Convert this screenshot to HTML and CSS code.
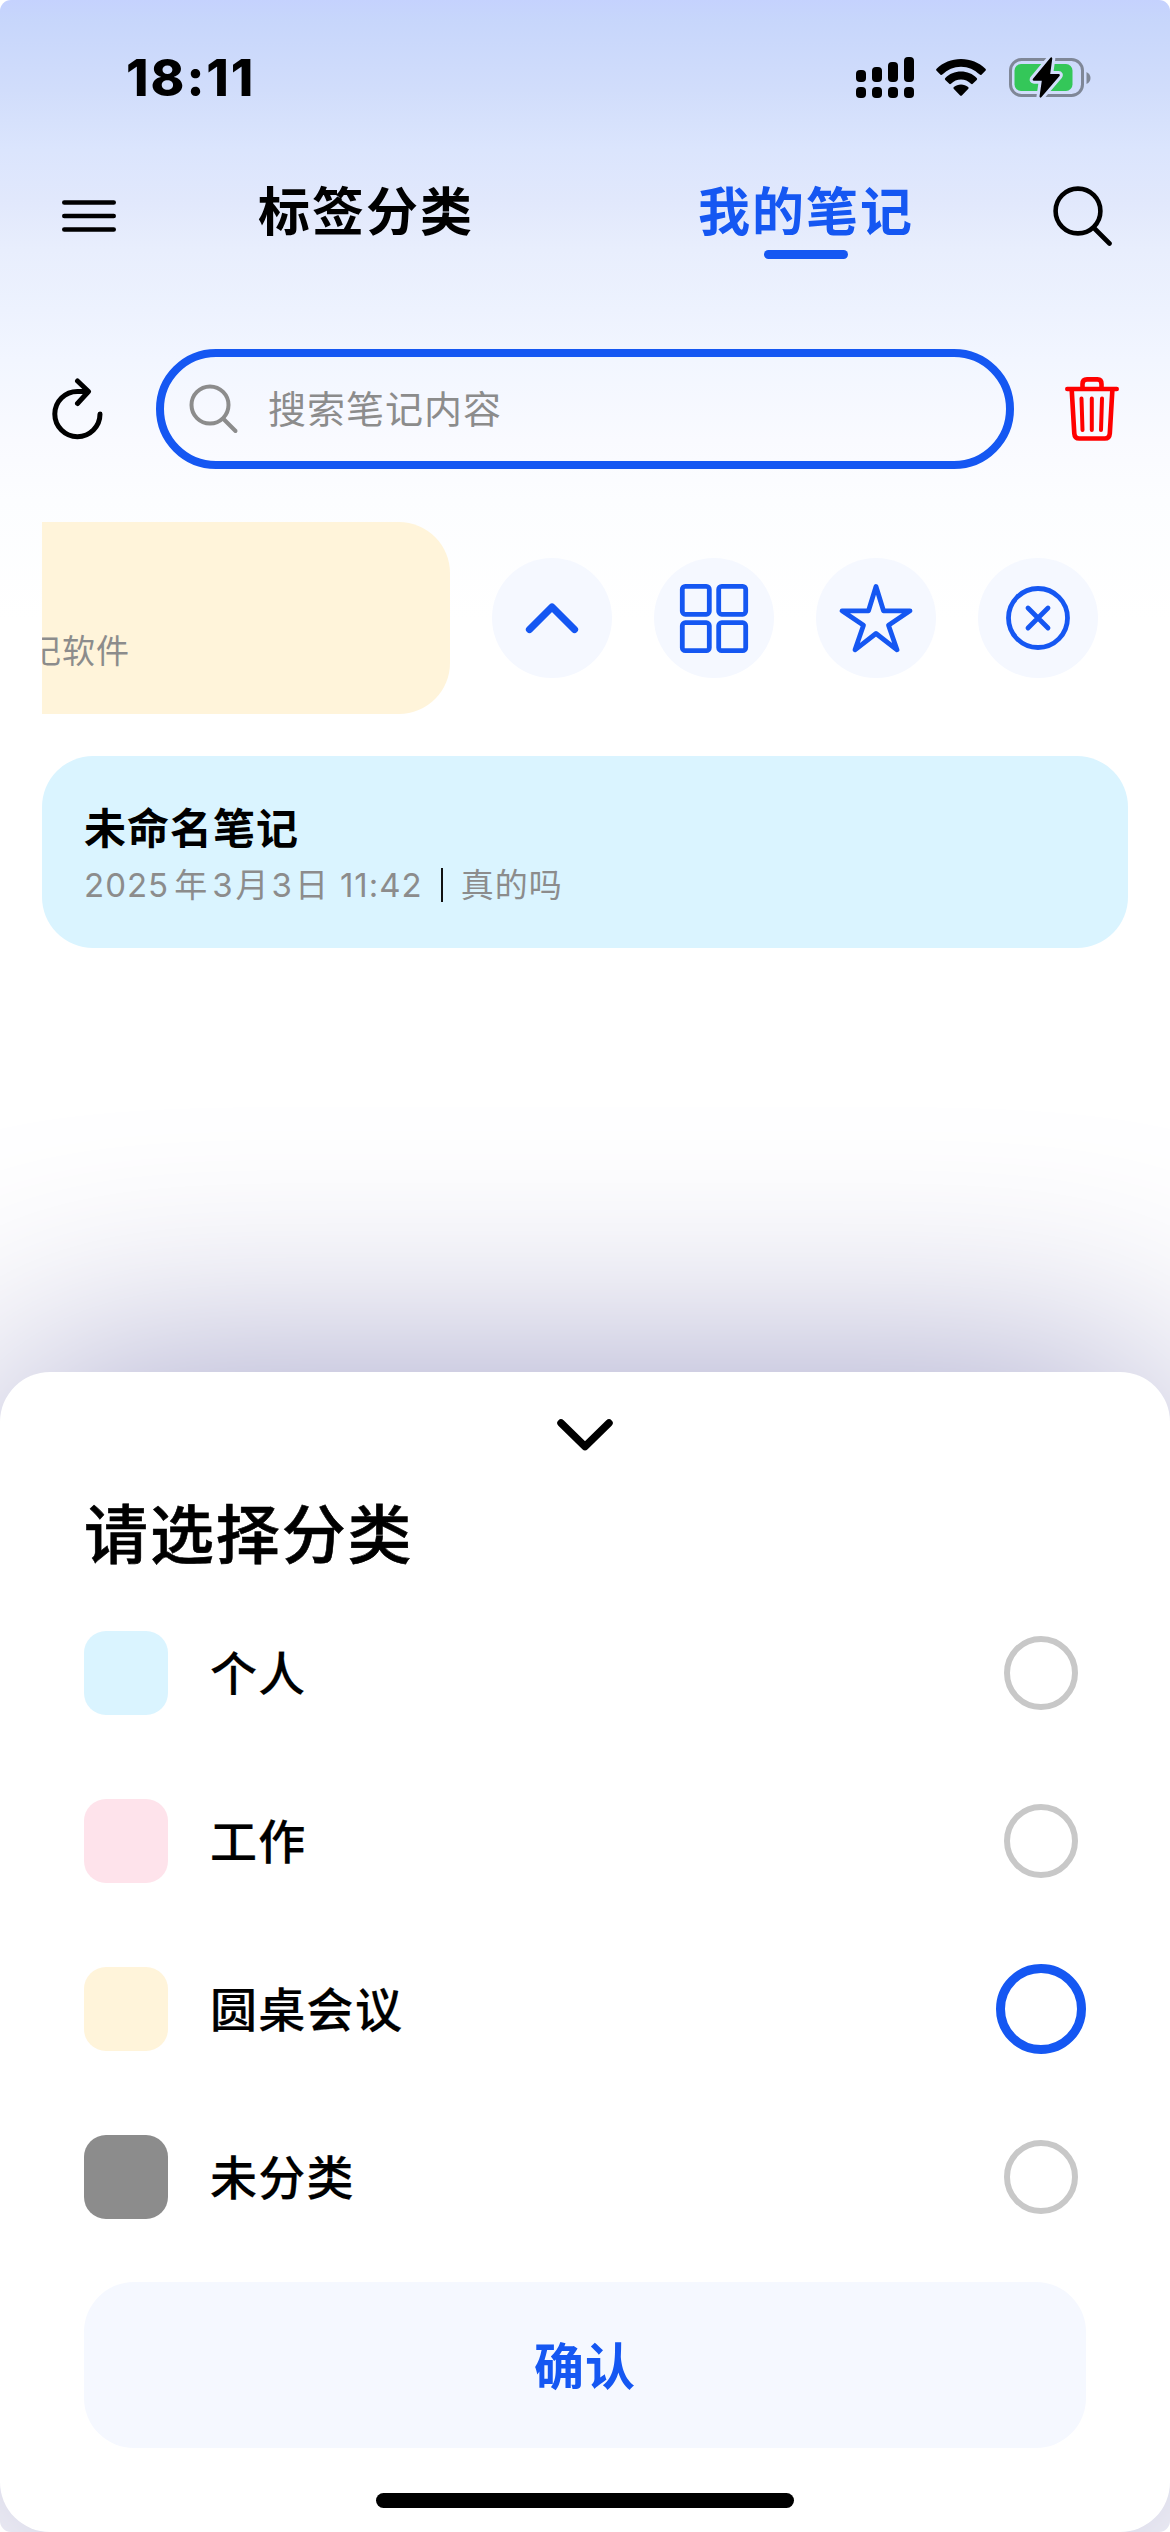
FILE: index.html
```html
<!DOCTYPE html>
<html lang="zh-CN">
<head>
<meta charset="utf-8">
<title>我的笔记</title>
<link rel="stylesheet" href="styles.css">
</head>
<body>
<div class="screen">
  <header class="status">
    <span class="time">18:11</span>
    <span class="indicators">
      <svg class="signal" viewBox="0 0 58 42">
        <rect x="0" y="13" width="10" height="12" rx="4"/><rect x="16" y="10" width="10" height="15" rx="4"/><rect x="32" y="5" width="10" height="20" rx="4"/><rect x="48" y="0" width="10" height="25" rx="4"/>
        <rect x="0" y="30" width="10" height="11" rx="4"/><rect x="16" y="30" width="10" height="11" rx="4"/><rect x="32" y="30" width="10" height="11" rx="4"/><rect x="48" y="30" width="10" height="11" rx="4"/>
      </svg>
      <svg class="wifi" viewBox="0 0 50 37">
        <path d="M25 0C15.500 0 7 3.600.600 9.700q-1 1 0 2l3.700 3.800q1 1 2 .100C11.400 10.700 17.900 7.700 25 7.700s13.600 3 18.700 7.900q1 .9 2-.1l3.700-3.800q1-1 0-2C43 3.600 34.500 0 25 0z"/>
        <path d="M25 12.600c-6.100 0-11.600 2.400-15.700 6.300q-1 1 0 2l3.700 3.700q1 1 2 .1c2.700-2.500 6.200-4.100 10-4.100s7.300 1.600 10 4.100q1 .9 2-.1l3.700-3.700q1-1 0-2C36.600 15 31.100 12.600 25 12.600z"/>
        <path d="M25 25.400c-2.700 0-5.200 1-7.100 2.700q-1 .9 0 1.900l6 6.200q1.100 1.100 2.200 0l6-6.200q1-1 0-1.900C30.200 26.400 27.700 25.400 25 25.400z"/>
      </svg>
      <svg class="battery" viewBox="0 0 84 42">
        <rect x="2.500" y="2.500" width="72" height="36" rx="11" fill="none" stroke="#7f8797" stroke-width="3"/>
        <path d="M78.500 15q4 2 4 6t-4 6z" fill="#7f8797"/>
        <rect x="6.500" y="7" width="58" height="27" rx="6.500" fill="#34c759"/>
        <path d="M42.200 1 25 21.700q-1 2 1 2h7.800L31.500 39.500q.5 2 2 .5L51.500 19q1-2-1-2h-8.300L44.300 1.500q-.6-2-2.100-.5z" fill="#000" stroke="#d1ddfb" stroke-width="6" paint-order="stroke"/>
      </svg>
    </span>
  </header>

  <nav class="tabs">
    <svg class="menu" viewBox="0 0 54 32"><path d="M2.300 2.500h49.400M2.300 16h49.400M2.300 29.500h49.400"/></svg>
    <span class="tab">标签分类</span>
    <span class="tab active">我的笔记</span>
    <svg class="find" viewBox="0 0 60 60"><circle cx="25" cy="25" r="22.400"/><path d="m41 42 15.500 15.500"/></svg>
  </nav>

  <div class="search-row">
    <svg class="refresh" viewBox="0 0 52 62"><path d="M48 36A22.600 22.600 0 1 1 25.500 13.500H36M25.500 3 36.500 13.500 25.500 25.500"/></svg>
    <div class="field">
      <svg class="lens" viewBox="0 0 50 50"><circle cx="21" cy="21" r="18.500"/><path d="m34.500 35 12 12"/></svg>
      <span>搜索笔记内容</span>
    </div>
    <svg class="trash" viewBox="0 0 54 64"><path d="M2.300 12h49.400M17.500 11V7q0-4.600 4.500-4.600h10.500q4 0 4 4.600v4M6.700 12.500l2.600 44q.4 5 5 5h25.500q4.600 0 5-5l2.600-44"/><path class="ribs" d="M16.500 21.500l1 31.500M26.800 21.500V53M37 21.500l-1 31.500"/></svg>
  </div>

  <div class="swipe-row">
    <div class="note swiped"><span class="excerpt">记软件</span></div>
    <div class="action"><svg viewBox="0 0 120 120"><path class="heavy" d="M37.500 71.500 60 49l22.500 22.500"/></svg></div>
    <div class="action"><svg viewBox="0 0 120 120"><rect x="28.300" y="28.300" width="27" height="28" rx="3"/><rect x="64.700" y="28.300" width="27" height="28" rx="3"/><rect x="28.300" y="64.700" width="27" height="28" rx="3"/><rect x="64.700" y="64.700" width="27" height="28" rx="3"/></svg></div>
    <div class="action"><svg viewBox="0 0 120 120"><path d="M60 28.500 67.500 52.800H94L72.500 67.300 81 91.800 60 75.500 39 91.800 47.500 67.300 26 52.800H52.500z"/></svg></div>
    <div class="action"><svg viewBox="0 0 120 120"><circle cx="60" cy="60" r="29.500"/><path d="m50 50 20 20M70 50 50 70"/></svg></div>
  </div>

  <article class="note blue">
    <h2>未命名笔记</h2>
    <p><span class="date"><span class="year">2025</span><span class="unit">年</span><span>3</span><span>月</span><span>3</span><span>日</span><span class="clock">11:42</span></span><i></i><span class="excerpt">真的吗</span></p>
  </article>

  <section class="sheet">
    <svg class="collapse" viewBox="0 0 56 32"><path d="m4 4 24 23.500L52 4"/></svg>
    <h1>请选择分类</h1>
    <ul>
      <li><b class="swatch sky"></b><span>个人</span><b class="radio"></b></li>
      <li><b class="swatch pink"></b><span>工作</span><b class="radio"></b></li>
      <li><b class="swatch cream"></b><span>圆桌会议</span><b class="radio on"></b></li>
      <li><b class="swatch gray"></b><span>未分类</span><b class="radio"></b></li>
    </ul>
    <div class="confirm">确认</div>
    <div class="home"></div>
  </section>
</div>
</body>
</html>
```
FILE: styles.css
```css
* { box-sizing: border-box; margin: 0; padding: 0; }
body { background: #fff; font-family: Inter, "Noto Sans CJK SC", sans-serif; color: #000; }
svg { display: block; flex: none; fill: none; stroke-linecap: round; stroke-linejoin: round; }
.screen {
  width: 1170px; height: 2532px; overflow: hidden; border-radius: 11px;
  display: flex; flex-direction: column;
  background: linear-gradient(#c5d2fe 0, #c7d6fb 20px, #d1ddfb 90px, #dbe5fd 150px, #e1e8fc 200px, #e8eefd 250px, #edf2fe 310px, #f2f6ff 360px, #f9faff 440px, #fcfdff 500px, #fff 620px);
}
.status { height: 156px; padding: 0 78px 0 126px; display: flex; justify-content: space-between; }
.time { font-size: 51px; font-weight: 800; line-height: 60px; padding-top: 48px; letter-spacing: 2px; }
.indicators { display: flex; align-items: flex-start; padding-top: 57px; }
.signal { width: 58px; height: 42px; fill: #000; margin-right: 22px; }
.wifi { width: 50px; height: 37px; fill: #000; margin: 2px 22px 0 0; }
.battery { width: 84px; height: 42px; }

.tabs { height: 193px; display: flex; align-items: flex-start; padding: 0 57px 0 62px; }
.menu { width: 54px; height: 32px; margin: 44px 142px 0 0; stroke: #000; stroke-width: 4.600; }
.tab { font-size: 52px; font-weight: 700; letter-spacing: 2px; line-height: 64px; padding-top: 25px; width: 216px; display: flex; flex-direction: column; align-items: center; gap: 5px; }
.active { color: #1557f2; margin-left: 224px; }
.active::after { content: ""; width: 84px; height: 9px; border-radius: 5px; background: #1557f2; }
.find { width: 60px; height: 60px; margin: 30px 0 0 auto; stroke: #000; stroke-width: 4.600; }

.search-row { height: 120px; display: flex; align-items: center; padding: 0 51px 0 52px; }
.refresh { width: 52px; height: 62px; stroke: #000; stroke-width: 5; }
.field { width: 858px; height: 120px; margin: 0 51px 0 52px; border: 8px solid #1557f2; border-radius: 60px; display: flex; align-items: center; color: #8c8c8c; font-size: 38px; letter-spacing: 1px; }
.field span { padding-bottom: 5px; }
.lens { width: 50px; height: 50px; margin: 0 29px 0 25px; stroke: #8c8c8c; stroke-width: 4; }
.trash { width: 54px; height: 64px; stroke: #f00; stroke-width: 4.600; }
.ribs { stroke-width: 4; }

.swipe-row { margin: 53px 42px 42px; height: 192px; display: flex; align-items: center; gap: 42px; }
.note { height: 192px; border-radius: 51px; }
.swiped { width: 408px; background: #fff4da; border-radius: 0 51px 51px 0; overflow: hidden; padding-top: 105px; }
.excerpt, .date { color: #8c8c8c; font-size: 33px; letter-spacing: 1px; line-height: 48px; }
.swiped .excerpt { display: block; margin-left: -14px; }
.action { width: 120px; height: 120px; border-radius: 50%; background: #f5f8ff; }
.action svg { width: 120px; height: 120px; stroke: #1557f2; stroke-width: 4.800; }
.action .heavy { stroke-width: 7.200; }
.blue { margin: 0 42px; background: #daf4ff; padding: 42px 42px 0; }
.blue h2 { font-size: 42px; font-weight: 700; letter-spacing: 1px; line-height: 62px; }
.blue p { display: flex; align-items: center; line-height: 48px; padding-top: 1px; }
.date { display: flex; gap: 2px; }
.year { margin-right: 3px; }
.unit { margin-right: 2px; }
.clock { margin-left: 9px; }
.blue i { width: 2px; height: 34px; background: #111; margin: 0 18px; }

.sheet { margin-top: 424px; height: 1160px; background: #fff; border-radius: 50px; box-shadow: 0 0 240px #a09fc7; padding: 47px 84px 0; display: flex; flex-direction: column; }
.collapse { width: 56px; height: 32px; align-self: center; stroke: #000; stroke-width: 7.500; }
.sheet h1 { font-size: 64px; font-weight: 500; letter-spacing: 1.900px; line-height: 80px; margin-top: 44px; -webkit-text-stroke: .6px #000; }
.sheet ul { list-style: none; margin-top: 56px; display: flex; flex-direction: column; gap: 84px; }
.sheet li { height: 84px; display: flex; align-items: center; font-size: 47px; font-weight: 500; letter-spacing: 1.300px; -webkit-text-stroke: .2px #000; }
.sheet li span { padding-bottom: 5px; }
.swatch { width: 84px; height: 84px; border-radius: 22px; margin-right: 42px; }
.sky { background: #daf4ff; } .pink { background: #fee3eb; } .cream { background: #fff4da; } .gray { background: #8c8c8c; }
.radio { width: 74px; height: 74px; border: 6px solid #c8c8c8; border-radius: 50%; margin: 0 8px 0 auto; }
.on { width: 90px; height: 90px; border: 9px solid #1557f2; margin: -3px 0 -3px auto; }
.confirm { margin-top: 63px; height: 166px; border-radius: 50px; background: #f5f8ff; color: #1557f2; font-size: 50px; font-weight: 700; letter-spacing: 1px; padding-bottom: 4px; display: flex; align-items: center; justify-content: center; }
.home { width: 418px; height: 15px; border-radius: 8px; background: #000; align-self: center; margin-top: 45px; }
```
